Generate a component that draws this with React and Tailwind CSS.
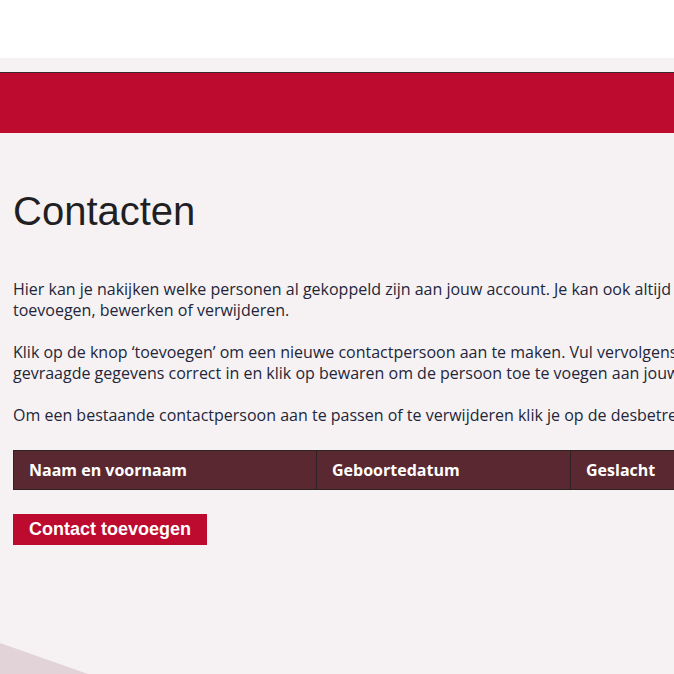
import React from 'react'

const paragraphs = [
  [
    'Hier kan je nakijken welke personen al gekoppeld zijn aan jouw account. Je kan ook altijd nieuwe contactpersonen',
    'toevoegen, bewerken of verwijderen.',
  ],
  [
    'Klik op de knop ‘toevoegen’ om een nieuwe contactpersoon aan te maken. Vul vervolgens alle',
    'gevraagde gegevens correct in en klik op bewaren om de persoon toe te voegen aan jouw account.',
  ],
  ['Om een bestaande contactpersoon aan te passen of te verwijderen klik je op de desbetreffende persoon.'],
]

const columns = [
  { label: 'Naam en voornaam', width: 'w-[302px]' },
  { label: 'Geboortedatum', width: 'w-[254px]' },
  { label: 'Geslacht', width: 'w-[200px]' },
  { label: 'Acties', width: 'w-[160px]' },
]

const App = () => {
  return (
    <div className="relative w-full min-h-[674px] overflow-hidden bg-[#f6f2f3]">
      {/* top white header area */}
      <div className="h-[58px] bg-white" />
      <div className="h-[14px]" />
      <div className="h-[61px] border-t border-[#3a2a2e] bg-[#bc0b2e]" />

      <main className="w-[1100px] px-[13px] pt-[55px]">
        <h1 className="text-[40px] leading-[46px] text-[#1f1f24] font-['Liberation_Sans',Arial,sans-serif]">
          Contacten
        </h1>

        <div className="mt-[45px] flex flex-col gap-[21px] font-['Open_Sans',sans-serif] text-[16px] leading-[21px] text-[#23263a]">
          {paragraphs.map((lines, i) => (
            <p key={i} className="whitespace-nowrap">
              {lines.map((line, j) => (
                <React.Fragment key={j}>
                  {line}
                  {j < lines.length - 1 && <br />}
                </React.Fragment>
              ))}
            </p>
          ))}
        </div>

        <div className="mt-[24px] flex h-[40px] border border-[#2b2326] bg-[#5a2830] w-fit">
          {columns.map((col, i) => (
            <div
              key={col.label}
              className={`${col.width} flex items-center px-[15px] font-['Open_Sans',sans-serif] text-[16px] font-bold text-white ${
                i > 0 ? 'border-l border-[#2b2326]' : ''
              }`}
            >
              {col.label}
            </div>
          ))}
        </div>

        <button className="mt-[24px] h-[31px] w-[194px] bg-[#bc0b2e] pl-[16px] text-left font-['Liberation_Sans',Arial,sans-serif] text-[18px] font-bold text-white">
          Contact toevoegen
        </button>
      </main>

      {/* decorative corner shape */}
      <svg className="absolute bottom-0 left-0" width="120" height="40" viewBox="0 0 120 40">
        <polygon points="0,9 88,40 0,40" fill="#e2d3d9" />
      </svg>
    </div>
  )
}

export default App
